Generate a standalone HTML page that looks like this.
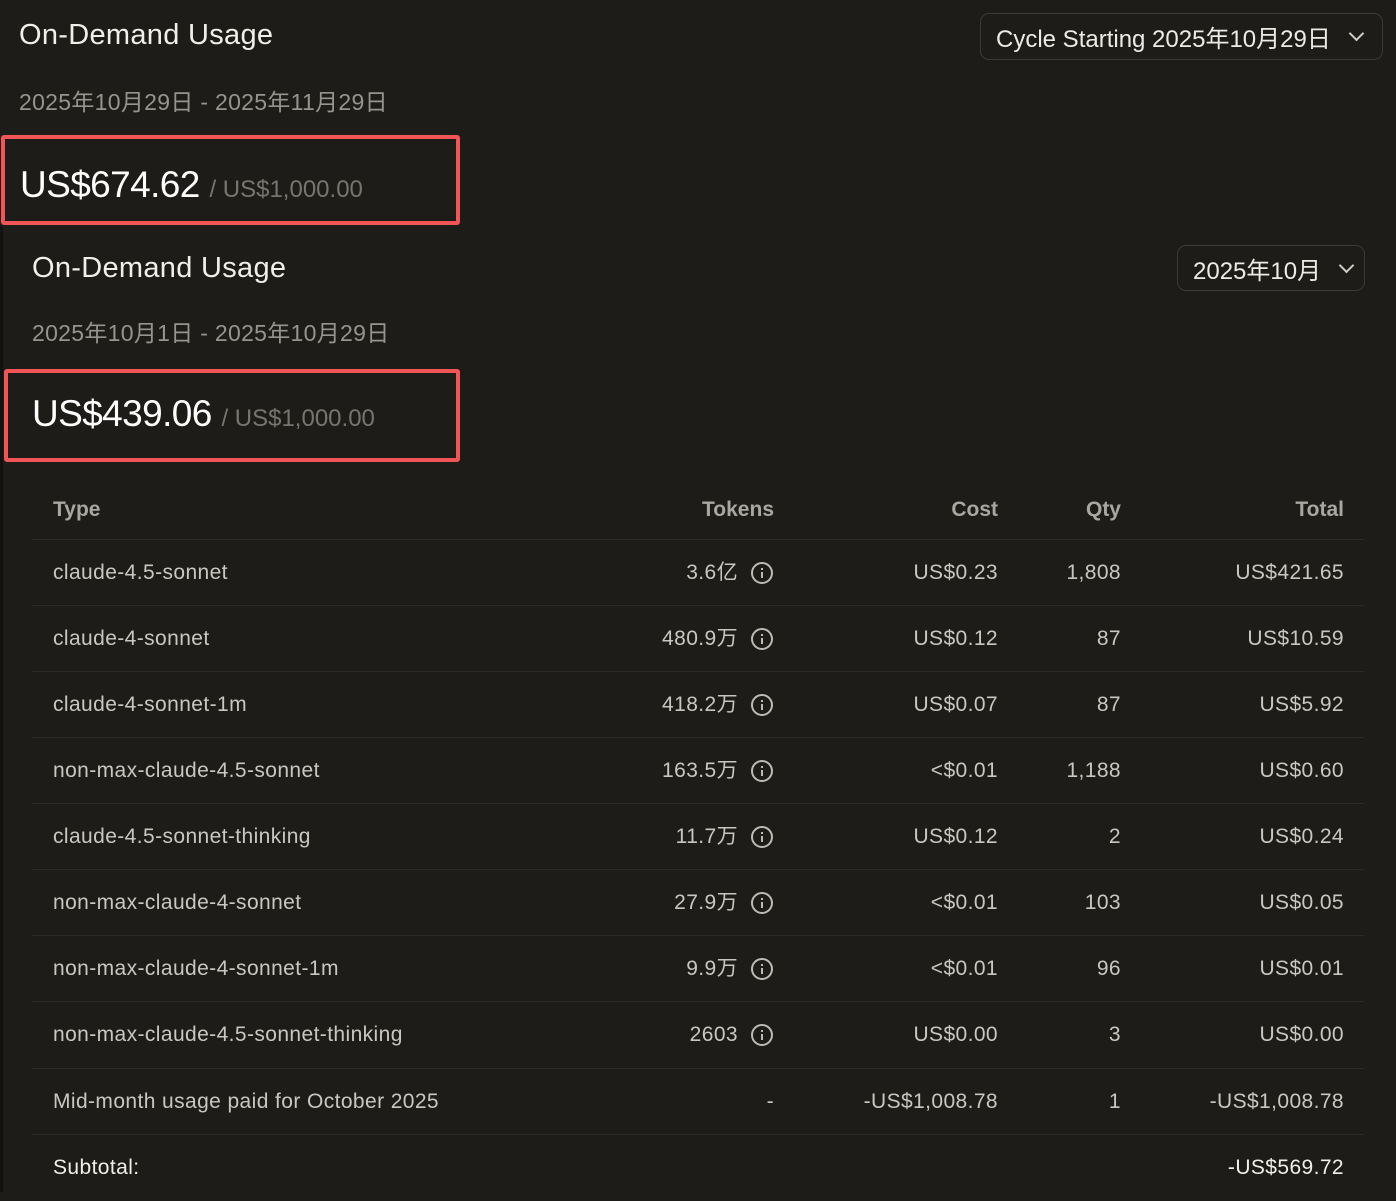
<!DOCTYPE html>
<html><head><meta charset="utf-8"><style>
html,body{margin:0;padding:0;width:1396px;height:1192px;overflow:hidden;background:#1d1c18;font-family:"Liberation Sans","Noto Sans CJK SC",sans-serif;}
.a{position:absolute;white-space:nowrap}
.strip{position:absolute;left:0;top:226px;width:3px;height:966px;background:#121210}
.box{position:absolute;border:4px solid #f25555;border-radius:3px}
.sel{position:absolute;border:1.5px solid #3a3935;border-radius:9px;color:#ecebe6;font-size:24px;box-sizing:border-box;display:flex;align-items:center}
.chev{display:inline-block;width:9px;height:9px;border-right:2px solid #cfcdc7;border-bottom:2px solid #cfcdc7;transform:rotate(45deg);margin-left:20px;margin-top:-6px}
.row{position:absolute;left:32px;width:1332px;height:66px;border-top:1px solid #2b2a26;font-size:21px;letter-spacing:0.4px;color:#c9c7c1}
.row span{position:absolute;top:0;line-height:66px}
.l{left:21px}
.tk{right:626px}
.ic{position:absolute;left:719px;top:22px;width:22px;height:22px;box-sizing:border-box;border:2px solid #bdbbb5;border-radius:50%}
.ic:before{content:"";position:absolute;left:8px;top:4px;width:2px;height:2px;background:#bdbbb5}
.ic:after{content:"";position:absolute;left:8px;top:8px;width:2px;height:6px;background:#bdbbb5}
.c{right:366px}.q{right:243px}.t{right:20px}
</style></head><body>
<div class="strip"></div>
<div class="a" style="left:19px;top:19px;font-size:29px;letter-spacing:0.3px;color:#f0efea">On-Demand Usage</div>
<div class="a" style="left:19px;top:83px;font-size:23px;letter-spacing:0.3px;color:#96948e">2025年10月29日 - 2025年11月29日</div>
<div class="sel" style="left:980px;top:13px;width:403px;height:47px;padding-left:15px">Cycle Starting 2025年10月29日<span class="chev"></span></div>
<div class="box" style="left:1px;top:135px;width:451px;height:82px"></div>
<div class="a" style="left:20px;top:164px;font-size:37px;letter-spacing:-0.6px;color:#fff">US$674.62 <span style="font-size:24px;letter-spacing:0;color:#77756f">/ US$1,000.00</span></div>
<div class="a" style="left:32px;top:252px;font-size:29px;letter-spacing:0.3px;color:#f0efea">On-Demand Usage</div>
<div class="a" style="left:32px;top:314px;font-size:23px;letter-spacing:0.3px;color:#96948e">2025年10月1日 - 2025年10月29日</div>
<div class="sel" style="left:1177px;top:245px;width:188px;height:46px;padding-left:15px">2025年10月<span class="chev"></span></div>
<div class="box" style="left:4px;top:369px;width:448px;height:85px"></div>
<div class="a" style="left:32px;top:393px;font-size:37px;letter-spacing:-0.6px;color:#fff">US$439.06 <span style="font-size:24px;letter-spacing:0;color:#77756f">/ US$1,000.00</span></div>

<div class="row" style="top:477px;border-top:none;font-weight:bold;letter-spacing:0;color:#a9a7a1"><span class="l">Type</span><span class="tk" style="right:590px">Tokens</span><span class="c">Cost</span><span class="q">Qty</span><span class="t">Total</span></div>
<div class="row" style="top:539px"><span class="l">claude-4.5-sonnet</span><span class="tk">3.6亿</span><i class="ic"></i><span class="c">US$0.23</span><span class="q">1,808</span><span class="t">US$421.65</span></div>
<div class="row" style="top:605px"><span class="l">claude-4-sonnet</span><span class="tk">480.9万</span><i class="ic"></i><span class="c">US$0.12</span><span class="q">87</span><span class="t">US$10.59</span></div>
<div class="row" style="top:671px"><span class="l">claude-4-sonnet-1m</span><span class="tk">418.2万</span><i class="ic"></i><span class="c">US$0.07</span><span class="q">87</span><span class="t">US$5.92</span></div>
<div class="row" style="top:737px"><span class="l">non-max-claude-4.5-sonnet</span><span class="tk">163.5万</span><i class="ic"></i><span class="c">&lt;$0.01</span><span class="q">1,188</span><span class="t">US$0.60</span></div>
<div class="row" style="top:803px"><span class="l">claude-4.5-sonnet-thinking</span><span class="tk">11.7万</span><i class="ic"></i><span class="c">US$0.12</span><span class="q">2</span><span class="t">US$0.24</span></div>
<div class="row" style="top:869px"><span class="l">non-max-claude-4-sonnet</span><span class="tk">27.9万</span><i class="ic"></i><span class="c">&lt;$0.01</span><span class="q">103</span><span class="t">US$0.05</span></div>
<div class="row" style="top:935px"><span class="l">non-max-claude-4-sonnet-1m</span><span class="tk">9.9万</span><i class="ic"></i><span class="c">&lt;$0.01</span><span class="q">96</span><span class="t">US$0.01</span></div>
<div class="row" style="top:1001px"><span class="l">non-max-claude-4.5-sonnet-thinking</span><span class="tk">2603</span><i class="ic"></i><span class="c">US$0.00</span><span class="q">3</span><span class="t">US$0.00</span></div>
<div class="row" style="top:1068px"><span class="l">Mid-month usage paid for October 2025</span><span style="right:590px">-</span><span class="c">-US$1,008.78</span><span class="q">1</span><span class="t">-US$1,008.78</span></div>
<div class="row" style="top:1134px;color:#f0efea"><span class="l">Subtotal:</span><span class="t">-US$569.72</span></div>
</body></html>
